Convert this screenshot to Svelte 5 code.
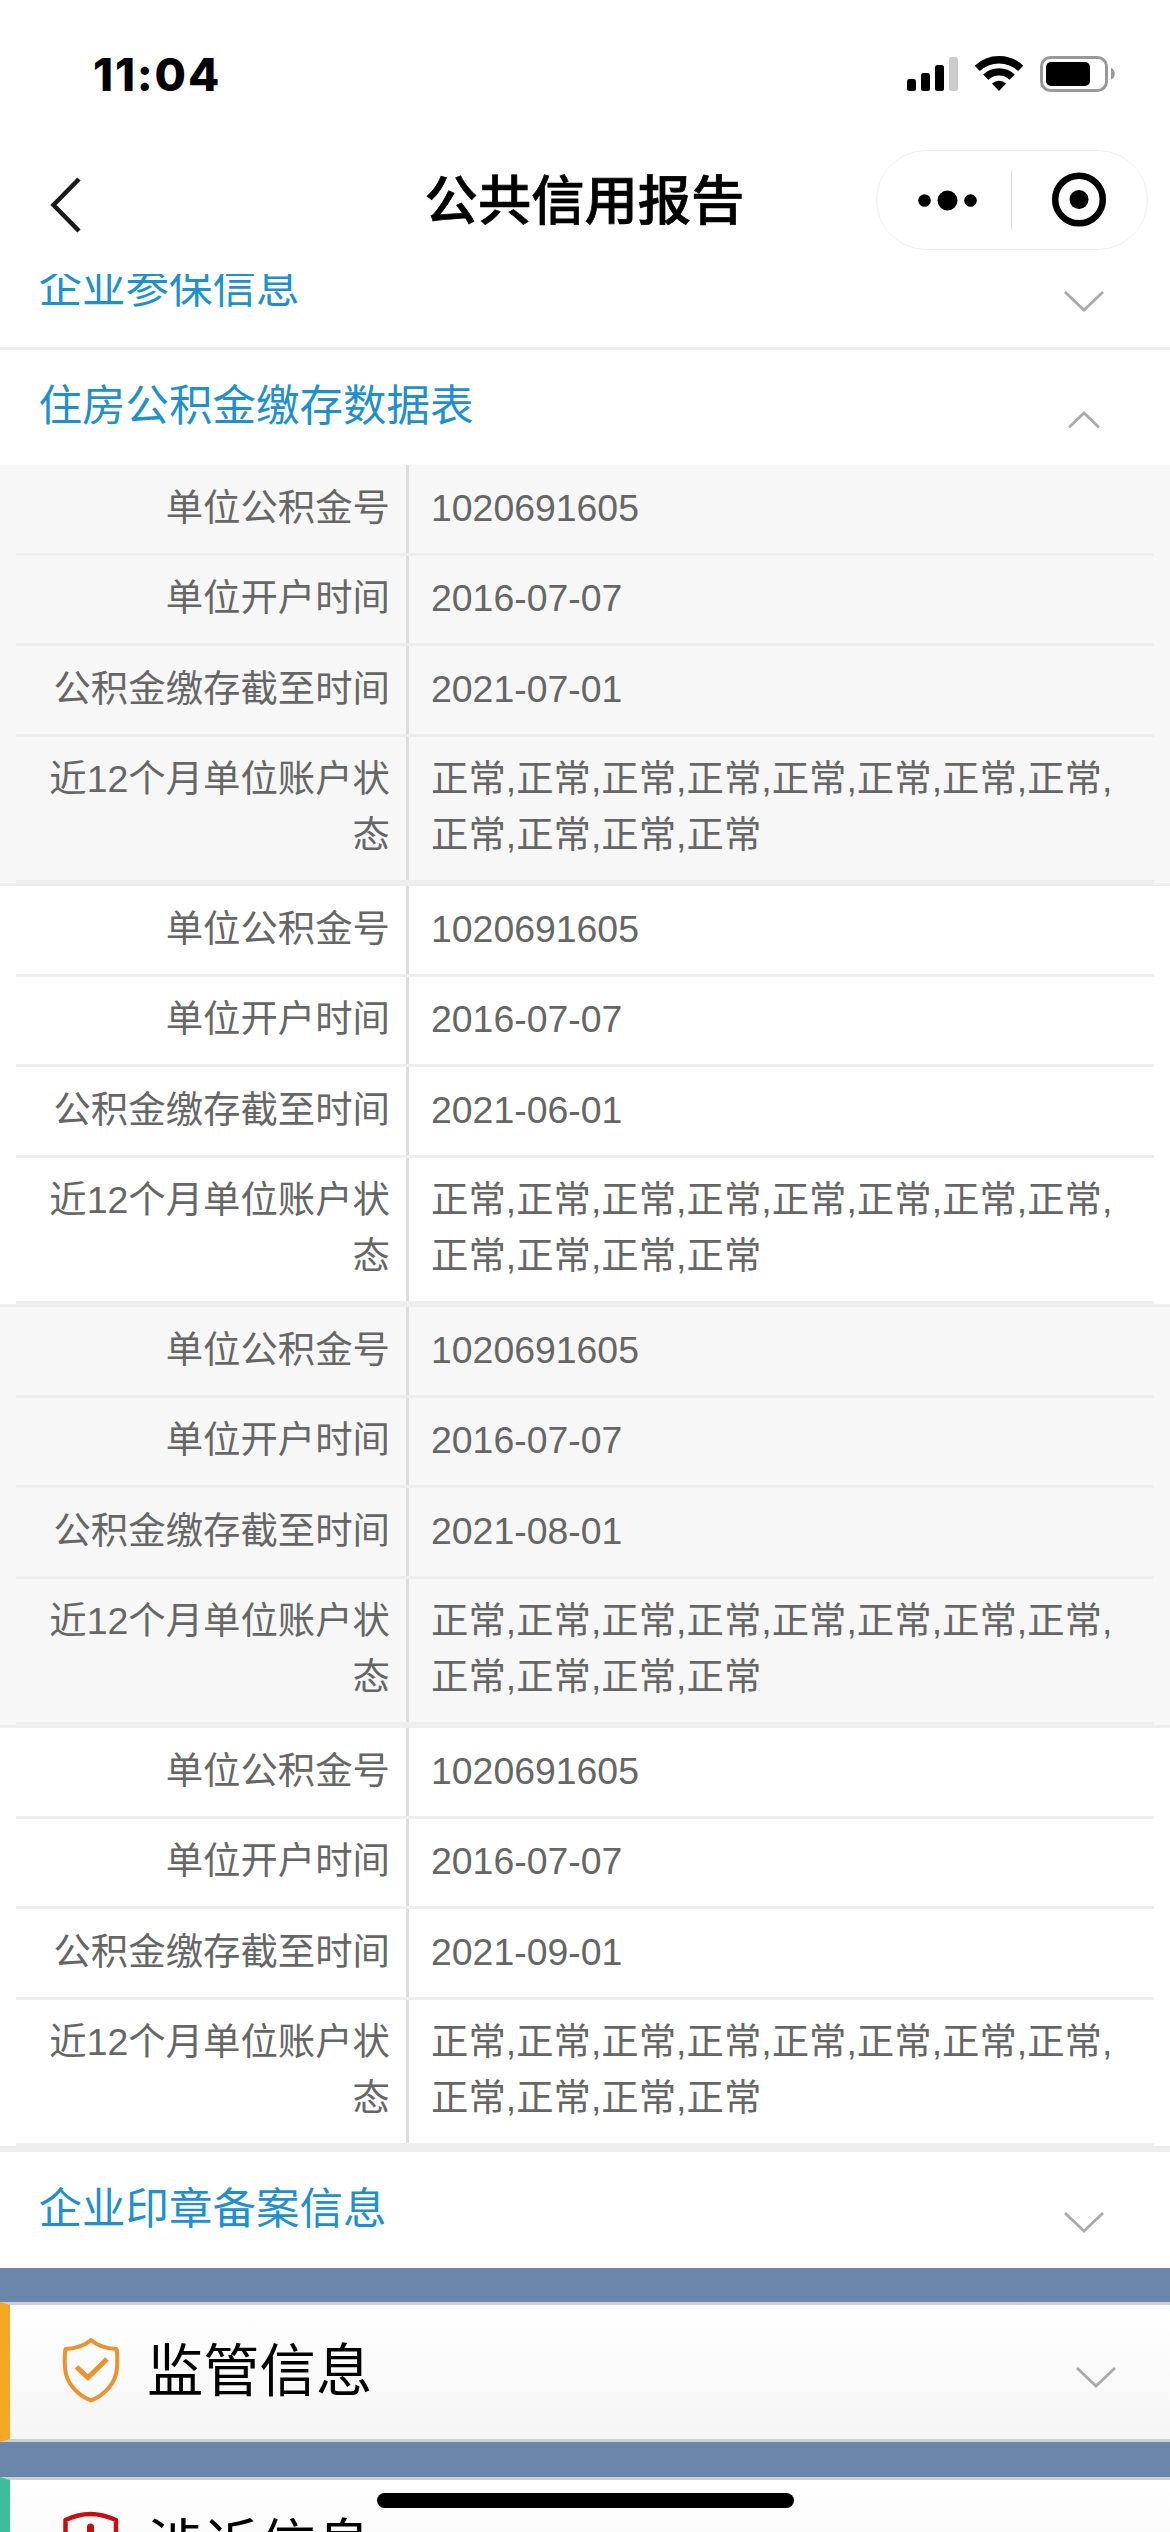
<script lang="ts">
	interface FundRecord {
		account: string;
		opened: string;
		paidUntil: string;
	}

	const status = Array(12).fill('正常').join(',');

	const records: FundRecord[] = [
		{ account: '1020691605', opened: '2016-07-07', paidUntil: '2021-07-01' },
		{ account: '1020691605', opened: '2016-07-07', paidUntil: '2021-06-01' },
		{ account: '1020691605', opened: '2016-07-07', paidUntil: '2021-08-01' },
		{ account: '1020691605', opened: '2016-07-07', paidUntil: '2021-09-01' }
	];

	let fundOpen = $state(true);

	function toRows(r: FundRecord): [string, string][] {
		return [
			['单位公积金号', r.account],
			['单位开户时间', r.opened],
			['公积金缴存截至时间', r.paidUntil],
			['近12个月单位账户状态', status]
		];
	}
</script>

{#snippet chevron(open: boolean)}
	{#if open}
		<svg class="chevron" width="42" height="22" viewBox="0 0 42 22">
			<path d="M6 18.5 21 4l15 14.5" />
		</svg>
	{:else}
		<svg class="chevron" width="42" height="22" viewBox="0 0 42 22">
			<path d="M2 2l19 18L40 2" />
		</svg>
	{/if}
{/snippet}

<div class="screen">
	<div class="status-bar">
		<span class="time">11:04</span>
		<svg class="indicators" width="210" height="40" viewBox="0 0 210 40">
			<rect x="1" y="25" width="9" height="12" rx="2.5" />
			<rect x="15" y="19" width="9" height="18" rx="2.5" />
			<rect x="29" y="11" width="9" height="26" rx="2.5" />
			<rect x="43" y="3" width="9" height="34" rx="2.5" fill="#ccc" />
			<g fill="none" stroke="#000" stroke-width="7.4">
				<path d="M71.3 14.4a31.5 31.5 0 0 1 43.4 0" />
				<path d="M79.8 23.2a19 19 0 0 1 26.4 0" />
			</g>
			<path d="M93 37l-7-7.4a10.2 10.2 0 0 1 14 0z" />
			<rect x="135.5" y="3.5" width="65" height="33" rx="9" fill="none" stroke="#999" stroke-width="3" />
			<rect x="140" y="8" width="44" height="24" rx="5" />
			<path d="M205 14c5 1.6 5 10 0 11.6z" fill="#999" />
		</svg>
	</div>

	<header class="nav">
		<button type="button" class="back" aria-label="返回">
			<svg width="34" height="58" viewBox="0 0 34 58">
				<path d="M31 3 5.5 29 31 55" fill="none" stroke="#1a1a1a" stroke-width="4.5" />
			</svg>
		</button>
		<h1>公共信用报告</h1>
		<div class="capsule">
			<svg width="270" height="98" viewBox="0 0 270 98">
				<circle cx="47.5" cy="49.5" r="6.3" />
				<circle cx="70.5" cy="49.5" r="10" />
				<circle cx="93.5" cy="49.5" r="6.3" />
				<path d="M134.5 20v58" stroke="#ddd" />
				<circle cx="202" cy="48.5" r="23.8" fill="none" stroke="#000" stroke-width="6.5" />
				<circle cx="202" cy="48.5" r="9.5" />
			</svg>
		</div>
	</header>

	<main>
		<div class="list">
			<button type="button" class="section">
				<span>企业参保信息</span>
				{@render chevron(false)}
			</button>
			<button type="button" class="section" onclick={() => (fundOpen = !fundOpen)}>
				<span>住房公积金缴存数据表</span>
				{@render chevron(fundOpen)}
			</button>
			{#if fundOpen}
				{#each records as record}
					<div class="record">
						{#each toRows(record) as [label, value]}
							<div class="row">
								<div class="label">{label}</div>
								<div class="value">{value}</div>
							</div>
						{/each}
					</div>
				{/each}
			{/if}
			<button type="button" class="section">
				<span>企业印章备案信息</span>
				{@render chevron(false)}
			</button>
		</div>

		<button type="button" class="card supervise">
			<svg class="icon" width="58" height="66" viewBox="0 0 58 66" fill="none" stroke="#ea9330" stroke-width="4" stroke-linejoin="round" stroke-linecap="round">
				<path d="M29 3C23 8.500 14 11.500 3.500 12c-.8 4-.9 12-.5 19C4 46 15 58 29 63.500 43 58 54 46 55 31c.4-7 .3-15-.5-19C44 11.500 35 8.500 29 3z" />
				<path d="M14.500 30 26 40.500 45 22" stroke-width="5" stroke-linecap="butt" stroke-linejoin="miter" />
			</svg>
			<span>监管信息</span>
			{@render chevron(false)}
		</button>
		<button type="button" class="card lawsuit">
			<svg class="icon" width="58" height="66" viewBox="0 0 58 66" fill="none" stroke="#c60d14" stroke-width="4.5" stroke-linejoin="round">
				<path d="M28.500 3C20 3 11 5.500 3.500 9v26C4 48 15 58 28.500 63 42 58 53 48 54 35V9C46 5.500 37 3 28.500 3z" />
				<path d="M28.500 16v22" stroke-width="7" stroke-linecap="round" />
				<circle cx="28.500" cy="49" r="2" />
			</svg>
			<span>涉诉信息</span>
			{@render chevron(false)}
		</button>
	</main>
	<div class="home-indicator"></div>
</div>

<style>
	:global(body) {
		background: #6a86ab;
	}
	.screen {
		position: relative;
		display: flex;
		flex-direction: column;
		width: 1170px;
		height: 2532px;
		overflow: hidden;
		font-family: 'Liberation Sans', 'Noto Sans CJK SC', sans-serif;
		color: #666;
	}
	button {
		border: 0;
		padding: 0;
		margin: 0;
		background: none;
		font: inherit;
		color: inherit;
		text-align: left;
	}
	svg {
		display: block;
		flex: none;
	}
	.status-bar {
		box-sizing: border-box;
		height: 132px;
		flex: none;
		display: flex;
		align-items: flex-start;
		justify-content: space-between;
		padding: 54px 54px 0 93px;
		background: #fff;
	}
	.time {
		font: 800 45.5px/42px Inter, sans-serif;
		letter-spacing: 1.8px;
		color: #000;
	}
	.nav {
		box-sizing: border-box;
		height: 142px;
		flex: none;
		display: grid;
		grid-template-columns: 1fr auto 1fr;
		align-items: start;
		padding: 18px 22px 0 48px;
		background: #fff;
	}
	.back {
		margin-top: 26px;
	}
	h1 {
		margin: 12px 0 0;
		padding-right: 27px;
		font-size: 53.3px;
		line-height: 80px;
		font-weight: 500;
		-webkit-text-stroke: 0.7px #000;
		color: #000;
	}
	.capsule {
		justify-self: end;
		border: 1px solid #eee;
		border-radius: 50px;
	}
	main {
		flex: 1;
		min-height: 0;
		overflow: hidden;
	}
	.list {
		margin-top: -46px;
		background: #fff;
	}
	.section {
		box-sizing: border-box;
		width: 100%;
		height: 118.5px;
		display: flex;
		align-items: center;
		justify-content: space-between;
		padding: 0 65px 0 38.5px;
		border-top: 3px solid #eee;
		font-size: 43.5px;
		line-height: 60px;
		color: #1f90cd;
	}
	.section span {
		margin-top: -2px;
	}
	.section .chevron {
		margin-top: 25px;
	}
	.chevron {
		fill: none;
		stroke: #aaa;
		stroke-width: 2.8;
	}
	.record {
		padding: 0 16px;
		border-bottom: 3px solid #eee;
	}
	.record:nth-of-type(odd) {
		background: #f7f7f7;
	}
	.row {
		display: grid;
		grid-template-columns: 393px 1fr;
		border-bottom: 3px solid #eee;
		font-size: 37.4px;
		line-height: 56px;
	}
	.label {
		padding: 14.5px 16px 17px 0;
		border-right: 3px solid #ddd;
		text-align: right;
	}
	.value {
		padding: 14.5px 30px 17px 22px;
	}
	.card {
		box-sizing: border-box;
		width: 100%;
		height: 140px;
		display: flex;
		align-items: center;
		margin-top: 34.5px;
		padding: 0 53px 0 52px;
		border: solid #c8d0d6;
		border-width: 3px 0;
		border-left: 10px solid;
		background: linear-gradient(#fff, #f5f5f5);
	}
	.card .icon {
		margin-top: -5px;
	}
	.card span {
		flex: 1;
		margin-left: 27px;
		font-size: 56.3px;
		line-height: 80px;
		color: #000;
	}
	.supervise {
		border-left-color: #f5a623;
	}
	.lawsuit {
		border-left-color: #3dbd9b;
	}
	.card .chevron {
		margin-top: 9px;
	}
	.home-indicator {
		position: absolute;
		left: 377px;
		bottom: 24px;
		width: 417px;
		height: 15px;
		border-radius: 8px;
		background: #000;
	}
</style>
